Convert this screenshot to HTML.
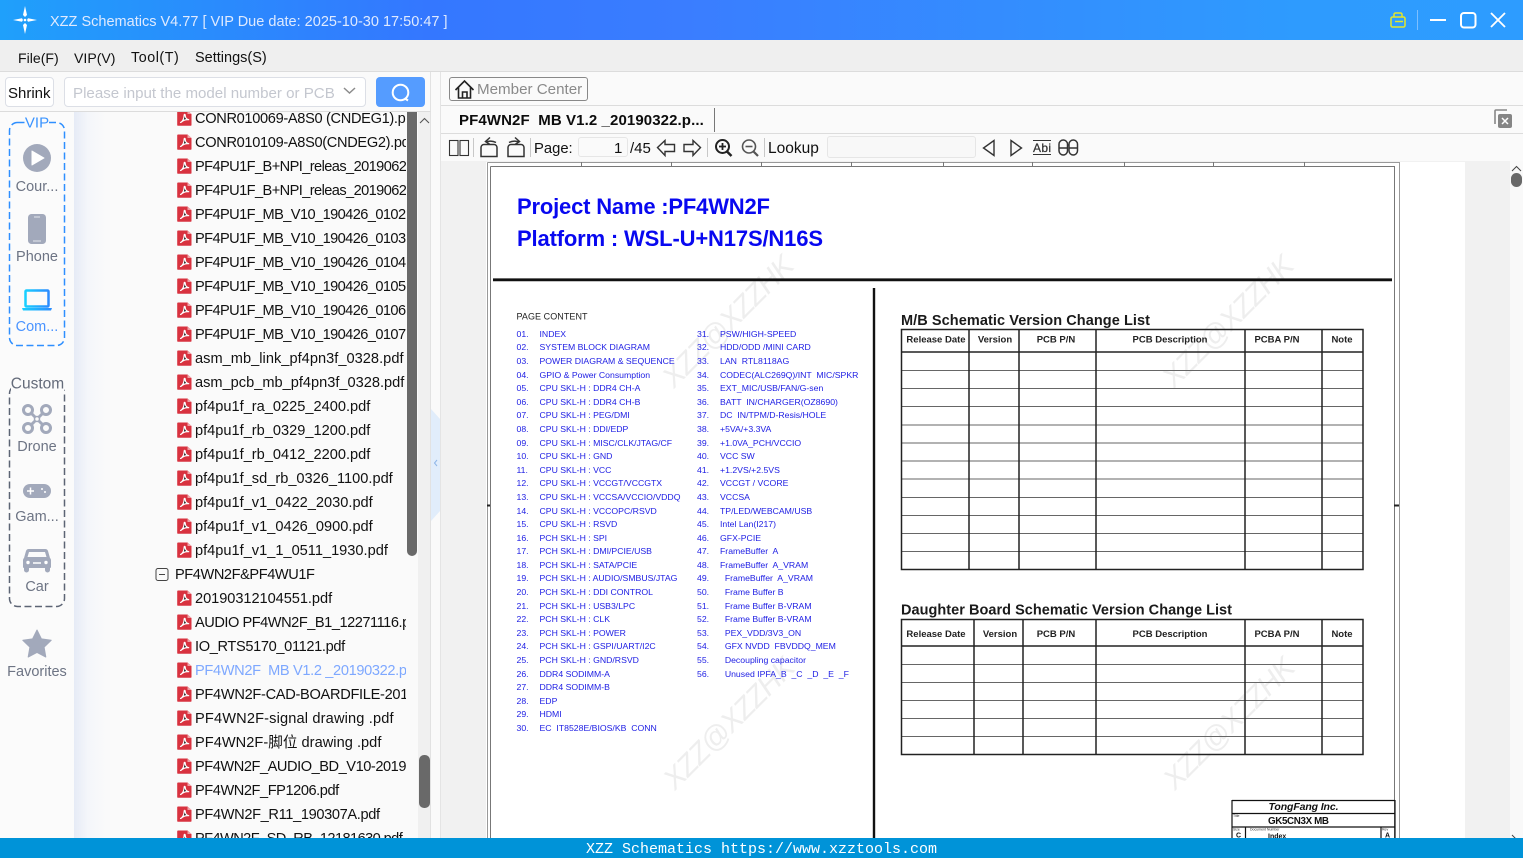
<!DOCTYPE html>
<html lang="en"><head><meta charset="utf-8"><title>XZZ Schematics</title>
<style>
html,body{margin:0;padding:0;width:1523px;height:858px;overflow:hidden;background:#fafafa;font-family:"Liberation Sans","Noto Sans CJK SC",sans-serif;color:#111}
.t{position:absolute;white-space:pre;line-height:20px;height:20px}
.b{position:absolute;box-sizing:border-box}
#title{left:0;top:0;width:1523px;height:40px;background:linear-gradient(90deg,#1fa0fb 0,#3477ff 28%,#3a7dff 45%,#2e9bfe 85%,#2d9cff 100%)}
#tree{left:74px;top:112px;width:332px;height:726px;overflow:hidden;background:linear-gradient(90deg,#e6ebf6 0,#f4f6fa 14px,#fafafa 32px)}
#rows{position:absolute;left:0;top:-6px}
#rows div{position:relative;height:24px;line-height:26px;font-size:14.6px;white-space:pre;padding-left:121px;color:#111}
#rows svg{position:absolute;left:103px;top:4px;width:15px;height:16px}
#rows .c{letter-spacing:-.58px}
.s{font-size:14.5px;color:#6d7484;text-align:center;left:0;width:74px}
.l{position:absolute;font-size:8.7px;line-height:13.586px;color:#2020e4;white-space:pre}
.l i{font-style:normal;display:inline-block;width:23px}
#foot{left:0;top:838px;width:1523px;height:20px;background:#0093d8;color:#fff;font:15px/24px "Liberation Mono",monospace;text-align:center;overflow:hidden}
</style></head><body>

<div class="b" id="title"></div>
<div class="t" style="left:50px;top:12px;font-size:14.52px;color:#dfeaff">XZZ Schematics V4.77 [ VIP Due date: 2025-10-30 17:50:47 ]</div>

<div class="b" style="left:0;top:40px;width:1523px;height:32px;background:#efefef;border-bottom:1px solid #dcdcdc"></div>
<div class="t" style="left:18px;top:48px;font-size:14.1px">File(F)</div>
<div class="t" style="left:74px;top:48px;font-size:14.1px">VIP(V)</div>
<div class="t" style="left:131px;top:48px;font-size:14.3px;letter-spacing:.55px">Tool(T)</div>
<div class="t" style="left:195px;top:48px;font-size:14.5px">Settings(S)</div>

<!-- left panel -->
<div class="b" style="left:0;top:72px;width:431px;height:40px;background:#fafafa;border-bottom:1px solid #dcdcdc;border-right:1px solid #e2e2e2"></div>
<div class="b" style="left:5px;top:77px;width:49px;height:30px;background:#fff;border:1px solid #dcdfe6;border-radius:4px"></div>
<div class="t" style="left:8px;top:84px;font-size:15px">Shrink</div>
<div class="b" style="left:64px;top:77px;width:302px;height:30px;background:#fff;border:1px solid #dcdfe6;border-radius:4px"></div>
<div class="t" style="left:73px;top:84px;font-size:15.1px;color:#c4c7cf">Please input the model number or PCB</div>
<div class="b" style="left:376px;top:77px;width:49px;height:30px;background:#559cff;border-radius:4px"></div>

<div class="b" style="left:0;top:112px;width:74px;height:726px;background:#fbfbfb"></div>
<div class="b" id="tree"><div id="rows">
<div style="letter-spacing:-.33px"><svg><use href="#p"/></svg>CONR010069-A8S0 (CNDEG1).pdf</div>
<div style="letter-spacing:-.33px"><svg><use href="#p"/></svg>CONR010109-A8S0(CNDEG2).pdf</div>
<div class="c"><svg><use href="#p"/></svg>PF4PU1F_B+NPI_releas_20190620.pdf</div>
<div class="c"><svg><use href="#p"/></svg>PF4PU1F_B+NPI_releas_20190621.pdf</div>
<div class="c"><svg><use href="#p"/></svg>PF4PU1F_MB_V10_190426_0102.pdf</div>
<div class="c"><svg><use href="#p"/></svg>PF4PU1F_MB_V10_190426_0103.pdf</div>
<div class="c"><svg><use href="#p"/></svg>PF4PU1F_MB_V10_190426_0104.pdf</div>
<div class="c"><svg><use href="#p"/></svg>PF4PU1F_MB_V10_190426_0105.pdf</div>
<div class="c"><svg><use href="#p"/></svg>PF4PU1F_MB_V10_190426_0106.pdf</div>
<div class="c"><svg><use href="#p"/></svg>PF4PU1F_MB_V10_190426_0107.pdf</div>
<div style="letter-spacing:.03px"><svg><use href="#p"/></svg>asm_mb_link_pf4pn3f_0328.pdf</div>
<div><svg><use href="#p"/></svg>asm_pcb_mb_pf4pn3f_0328.pdf</div>
<div><svg><use href="#p"/></svg>pf4pu1f_ra_0225_2400.pdf</div>
<div><svg><use href="#p"/></svg>pf4pu1f_rb_0329_1200.pdf</div>
<div><svg><use href="#p"/></svg>pf4pu1f_rb_0412_2200.pdf</div>
<div><svg><use href="#p"/></svg>pf4pu1f_sd_rb_0326_1100.pdf</div>
<div><svg><use href="#p"/></svg>pf4pu1f_v1_0422_2030.pdf</div>
<div><svg><use href="#p"/></svg>pf4pu1f_v1_0426_0900.pdf</div>
<div><svg><use href="#p"/></svg>pf4pu1f_v1_1_0511_1930.pdf</div>
<div style="padding-left:101px;letter-spacing:-.43px">PF4WN2F&amp;PF4WU1F</div>
<div style="letter-spacing:-.05px"><svg><use href="#p"/></svg>20190312104551.pdf</div>
<div style="letter-spacing:-.47px"><svg><use href="#p"/></svg>AUDIO PF4WN2F_B1_12271116.pdf</div>
<div style="letter-spacing:-.35px"><svg><use href="#p"/></svg>IO_RTS5170_01121.pdf</div>
<div style="color:#7ea8ff;letter-spacing:-.35px"><svg><use href="#p"/></svg>PF4WN2F  MB V1.2 _20190322.pdf</div>
<div style="letter-spacing:-.3px"><svg><use href="#p"/></svg>PF4WN2F-CAD-BOARDFILE-2019.pdf</div>
<div style="letter-spacing:.15px"><svg><use href="#p"/></svg>PF4WN2F-signal drawing .pdf</div>
<div style="letter-spacing:.03px"><svg><use href="#p"/></svg>PF4WN2F-脚位 drawing .pdf</div>
<div style="letter-spacing:-.45px"><svg><use href="#p"/></svg>PF4WN2F_AUDIO_BD_V10-2019.pdf</div>
<div style="letter-spacing:-.44px"><svg><use href="#p"/></svg>PF4WN2F_FP1206.pdf</div>
<div style="letter-spacing:-.35px"><svg><use href="#p"/></svg>PF4WN2F_R11_190307A.pdf</div>
<div class="c"><svg><use href="#p"/></svg>PF4WN2F_SD_RB_12181630.pdf</div>
</div></div>
<div class="b" style="left:406px;top:112px;width:12px;height:726px;background:#fafafa"></div>
<div class="b" style="left:407px;top:112px;width:10px;height:444px;background:#696969;border-radius:0 0 5px 5px"></div>
<div class="b" style="left:418px;top:112px;width:13px;height:726px;background:#f0f0f0;border-right:1px solid #e2e2e2"></div>
<div class="b" style="left:419px;top:755px;width:11px;height:53px;background:#696969;border-radius:5px"></div>
<div class="b" style="left:431px;top:72px;width:10px;height:766px;background:#fafafa;border-right:1px solid #e4e4e4"></div>

<!-- sidebar text -->
<div class="t s" style="top:177px">Cour...</div>
<div class="t s" style="top:247px">Phone</div>
<div class="t s" style="top:317px;color:#4a94ff">Com...</div>
<div class="t s" style="top:437px">Drone</div>
<div class="t s" style="top:507px">Gam...</div>
<div class="t s" style="top:577px">Car</div>
<div class="t s" style="top:662px">Favorites</div>

<!-- right header -->
<div class="b" style="left:441px;top:72px;width:1082px;height:34px;background:#fafafa;border-bottom:1px solid #dcdcdc"></div>
<div class="b" style="left:441px;top:106px;width:1082px;height:28px;background:#fafafa;border-bottom:1px solid #dcdcdc"></div>
<div class="b" style="left:441px;top:134px;width:1082px;height:27px;background:#fafafa"></div>
<div class="b" style="left:449px;top:77px;width:139px;height:24px;background:#fafafa;border:1px solid #888;border-radius:3px"></div>
<div class="t" style="left:477px;top:80px;font-size:15.15px;color:#8a8a8a">Member Center</div>
<div class="t" style="left:459px;top:111px;font-size:15px;font-weight:bold;color:#0c0c0c;letter-spacing:.1px">PF4WN2F  MB V1.2 _20190322.p...</div>
<div class="b" style="left:714px;top:108px;width:1px;height:24px;background:#777"></div>
<div class="t" style="left:534px;top:139px;font-size:14.8px">Page:</div>
<div class="b" style="left:578px;top:137px;width:50px;height:20px;background:#fafafa;border:1px solid #e6e6e6;border-radius:3px"></div>
<div class="t" style="left:614px;top:139px;font-size:15px">1</div>
<div class="t" style="left:630px;top:139px;font-size:15px">/45</div>
<div class="t" style="left:768px;top:139px;font-size:15.5px">Lookup</div>
<div class="b" style="left:827px;top:136px;width:149px;height:22px;background:#f8f8f8;border:1px solid #e6e6e6;border-radius:3px"></div>

<!-- viewer bg -->
<div class="b" style="left:441px;top:161px;width:1082px;height:677px;background:#f1f1f1"></div>
<div class="b" style="left:486px;top:162px;width:979px;height:676px;background:#fff"></div>
<div class="b" style="left:1510px;top:161px;width:13px;height:677px;background:#f9f9f9"></div>
<div class="b" style="left:1511px;top:173px;width:11px;height:14px;background:#696969;border-radius:5.5px"></div>

<!-- everything drawn -->
<svg style="position:absolute;left:0;top:0" width="1523" height="858" viewBox="0 0 1523 858" fill="none">
<defs>
<symbol id="p" viewBox="0 0 15 16"><path d="M1 .5h9.5L14.5 4v11a.8.8 0 0 1-.8.8H1a.8.8 0 0 1-.8-.8V1.300A.8.8 0 0 1 1 .5z" fill="#d8323f"/><path d="M10.500 .5V4h4z" fill="#f0a0a5"/><path d="M3.500 12.500c2-1 3.500-4 3.700-7.500 .1-1 1-.8 1 .2 0 2.300 1.300 4 3.500 4.500-2.500-.2-5.500.5-7.500 2.500z" stroke="#fff" stroke-width="1.200" stroke-linejoin="round"/></symbol>
<linearGradient id="lap" x1="0" y1="0" x2="1" y2="0"><stop offset="0" stop-color="#18d0ff"/><stop offset="1" stop-color="#2c8cff"/></linearGradient>
</defs>

<!-- logo -->
<path d="M25 6l2 9-2 2-2-2zM25 34l2-9-2-2-2 2zM13 20l9-1.700 1 1.700-1 1.700zM37 20l-9-1.700-1 1.700 1 1.700z" fill="#fff"/>
<circle cx="25" cy="20" r="1.300" fill="#fff"/>
<!-- window controls -->
<g stroke="#e3e72a" stroke-width="1.500"><rect x="1391" y="17" width="14" height="10" rx="1.500"/><path d="M1394 17v-2.500a1.500 1.500 0 0 1 1.500-1.500h5a1.500 1.500 0 0 1 1.500 1.500V17M1395 21.500h8"/></g>
<path d="M1417.500 10v20" stroke="#7dbfff"/>
<path d="M1430 20h16" stroke="#fff" stroke-width="2"/>
<rect x="1461" y="13" width="14.500" height="14.500" rx="3" stroke="#fff" stroke-width="2"/>
<path d="M1491 13l14 14M1505 13l-14 14" stroke="#fff" stroke-width="1.800"/>
<!-- search chevron + button -->
<path d="M344 88l5.500 5 5.500-5" stroke="#8c8c8c" stroke-width="1.500"/>
<circle cx="400.500" cy="92.500" r="7.800" stroke="#fff" stroke-width="2"/><path d="M405 98.500l3 2" stroke="#fff" stroke-width="2"/>
<!-- scroll arrows -->
<path d="M420 123l4.500-4.500 4.500 4.500" stroke="#555" stroke-width="1.100"/>
<path d="M1512 171l4.500-4.500 4.500 4.500" stroke="#444" stroke-width="1"/>
<path d="M1512 835l4.500 4.500" stroke="#444"/>
<!-- splitter -->
<path d="M431 409l9 10v92l-9 10z" fill="#e1edfb"/>
<path d="M437 460l-2.500 3 2.500 3" stroke="#8fb6e8" stroke-width="1"/>
<!-- tree minus -->
<rect x="156" y="568.500" width="12" height="12" rx="2" stroke="#444"/><path d="M159 574.500h6" stroke="#444"/>

<!-- sidebar -->
<rect x="9.500" y="122.500" width="55" height="223" rx="8" stroke="#2e8fff" stroke-width="1.500" stroke-dasharray="7 3.500"/>
<rect x="26" y="115" width="22" height="15" fill="#fbfbfb"/>
<text x="37" y="127.500" text-anchor="middle" font-size="15" fill="#3b94ff" font-family="Liberation Sans">VIP</text>
<circle cx="37" cy="158" r="14" fill="#a2a9bb"/><path d="M32 151v14l12-7z" fill="#fff" stroke="#fff" stroke-linejoin="round"/>
<rect x="28" y="214" width="18" height="30" rx="3.500" fill="#a2a9bb"/><path d="M34 217h6M33 241h8" stroke="#e4e6ec" stroke-width="1"/>
<rect x="25.500" y="290.500" width="23" height="16" rx="1" stroke="url(#lap)" stroke-width="2.500"/><path d="M22 308h30l-1 2.500H23z" fill="url(#lap)"/>

<rect x="9.500" y="385.500" width="55" height="221" rx="8" stroke="#5c6474" stroke-width="1.500" stroke-dasharray="7 3.500"/>
<rect x="11" y="375" width="53" height="17" fill="#fbfbfb"/>
<text x="37.500" y="388.500" text-anchor="middle" font-size="15.500" fill="#646b7a" font-family="Liberation Sans">Custom</text>
<g stroke="#a2a9bb" stroke-width="3"><circle cx="28" cy="410" r="4.500"/><circle cx="46" cy="410" r="4.500"/><circle cx="28" cy="428" r="4.500"/><circle cx="46" cy="428" r="4.500"/><path d="M31 413l12 12M43 413l-12 12"/></g>
<circle cx="37" cy="419" r="2.500" fill="#fbfbfb" stroke="#a2a9bb" stroke-width="1.500"/>
<rect x="23" y="484" width="28" height="14" rx="7" fill="#a2a9bb"/><path d="M27 491h7M30.500 487.500v7" stroke="#fff" stroke-width="1.500"/><circle cx="42" cy="489" r="1" fill="#fff"/><circle cx="45" cy="492" r="1" fill="#fff"/>
<path d="M29 549h16a3 3 0 0 1 3 2l2 7a3 3 0 0 1 1 2v7a1 1 0 0 1-1 1v2a1.500 1.500 0 0 1-5 0v-2H29v2a1.500 1.500 0 0 1-5 0v-2a1 1 0 0 1-1-1v-7a3 3 0 0 1 1-2l2-7a3 3 0 0 1 3-2z" fill="#a2a9bb"/><path d="M29 552h16l1.500 5h-19z" fill="#fbfbfb"/><circle cx="28" cy="562.500" r="1.700" fill="#fff"/><circle cx="46" cy="562.500" r="1.700" fill="#fff"/><path d="M33 563h8" stroke="#fff" stroke-width="1.500"/>
<path d="M37 630l4.400 8.900 9.800 1.400-7.100 6.900 1.700 9.800-8.800-4.600-8.800 4.600 1.700-9.800-7.100-6.900 9.800-1.400z" fill="#a2a9bb" stroke="#a2a9bb" stroke-linejoin="round"/>

<!-- member center house -->
<path d="M455.500 90l9-9 9 9M458.500 87.500V98h12V87.500M462.500 98v-6h4.500v6" stroke="#222" stroke-width="1.600"/>
<!-- close all -->
<path d="M1495 124v-13a1 1 0 0 1 1-1h11" stroke="#888" stroke-width="1.600"/><rect x="1498" y="114" width="14" height="14" rx="2" fill="#858585"/><path d="M1502 118l6 6M1508 118l-6 6" stroke="#fff" stroke-width="1.500"/>

<!-- toolbar -->
<g stroke="#333" stroke-width="1.100">
<rect x="449.500" y="140.500" width="8.500" height="15"/><rect x="460" y="140.500" width="8.500" height="15"/>
</g>
<path d="M473.500 138v19M530.500 138v19M707.500 138v19M764.500 138v19" stroke="#c8c8c8"/>
<g stroke="#333" stroke-width="1.500">
<path d="M481 156.500v-9a3 3 0 0 1 3-3h10a3 3 0 0 1 3 3v9zM486 142a9 6 0 0 1 10 .5M490 137.500l-4.500 4 4.500 3"/>
<path d="M508 156.500v-9a3 3 0 0 1 3-3h10a3 3 0 0 1 3 3v9zM519 142a9 6 0 0 0-10 .5M515 137.500l4.500 4-4.500 3"/>
</g>
<g stroke="#333" stroke-width="1.400" stroke-linejoin="miter">
<path d="M657.500 147.500l7.500-7v4h9.500v7H665v4z"/>
<path d="M700.500 147.500l-7.500-7v4H684v7h9v4z"/>
</g>
<circle cx="722.500" cy="146.500" r="6.500" stroke="#222" stroke-width="2"/><path d="M727 151.500l4.500 4.500" stroke="#222" stroke-width="2.500"/><path d="M719 146.500h7M722.500 143v7" stroke="#222" stroke-width="1.800"/>
<circle cx="749" cy="146.500" r="6.500" stroke="#555" stroke-width="1.600"/><path d="M753.500 151.500l4.500 4.500" stroke="#555" stroke-width="2.200"/><path d="M745.500 146.500h7" stroke="#555" stroke-width="1.600"/>
<path d="M994 140.500v15l-10.500-7.500z" stroke="#333" stroke-width="1.400"/>
<path d="M1011 140.500v15l10.500-7.500z" stroke="#333" stroke-width="1.400"/>
<path d="M1033 140.500h18M1033 154.500h18" stroke="#333"/>
<text x="1033" y="152" font-size="12" fill="#333" stroke="#333" stroke-width=".25" font-family="Liberation Sans" textLength="18">Abi</text>
<g stroke="#333" stroke-width="1.500"><rect x="1059" y="140" width="8.500" height="15" rx="4.200"/><rect x="1069" y="140" width="8.500" height="15" rx="4.200"/><path d="M1059 148h8.500M1069 148h8.500M1067.500 145h1.500"/></g>

<!-- document: frame -->
<path d="M487.500 162.500V838M487.500 162.500H1399.500V838" stroke="#999"/>
<path d="M490.500 166.500V838M490.500 166.500H1394.500V838" stroke="#777"/>
<path d="M581.500 162v4M671.500 162v4M761.500 162v4M851.500 162v4M943.500 162v4M1032.500 162v4M1124.500 162v4M1213.500 162v4M1304.500 162v4" stroke="#777"/>
<path d="M487 505.500h3M1394 505.500h5" stroke="#222" stroke-width="2"/>

<!-- watermarks -->
<g fill="#eeeeee" font-family="Liberation Sans" font-size="29" font-style="italic">
<text transform="translate(674 389) rotate(-45)" textLength="172">XZZ@XZZHK</text>
<text transform="translate(1174 389) rotate(-45)" textLength="172">XZZ@XZZHK</text>
<text transform="translate(675 791) rotate(-45)" textLength="172">XZZ@XZZHK</text>
<text transform="translate(1175 791) rotate(-45)" textLength="172">XZZ@XZZHK</text>
</g>

<!-- titles -->
<g font-family="Liberation Sans" font-weight="bold">
<text x="517" y="214" font-size="22" fill="#0808f0" textLength="253">Project Name :PF4WN2F</text>
<text x="517" y="246" font-size="22" fill="#0808f0" textLength="306">Platform : WSL-U+N17S/N16S</text>
<text x="901" y="325" font-size="14.500" fill="#1a1a1a" textLength="249">M/B Schematic Version Change List</text>
<text x="901" y="614.500" font-size="14.500" fill="#1a1a1a" textLength="331">Daughter Board Schematic Version Change List</text>
</g>
<path d="M493 279.800H1392" stroke="#111" stroke-width="2.800"/>
<path d="M874 288V838" stroke="#111" stroke-width="2.400"/>
<text x="516.500" y="319.500" font-size="9" fill="#222" font-family="Liberation Sans" textLength="71">PAGE CONTENT</text>

<!-- table 1 -->
<g stroke="#666" stroke-width="1">
<path d="M901 370.500H1363M901 388.500H1363M901 406.500H1363M901 425H1363M901 443H1363M901 461H1363M901 479H1363M901 497.500H1363M901 515.500H1363M901 533.500H1363M901 551.500H1363"/>
<path d="M901 664.500H1363M901 682.500H1363M901 700.500H1363M901 718.500H1363M901 736.500H1363"/>
</g>
<g stroke="#222" stroke-width="1.500">
<rect x="901.500" y="329.500" width="461.500" height="240"/>
<path d="M901 352H1363M969 329v241M1019 329v241M1096 329v241M1245 329v241M1322 329v241"/>
<rect x="901.500" y="619.500" width="461.500" height="135"/>
<path d="M901 646H1363M974 619v136M1023 619v136M1096 619v136M1245 619v136M1322 619v136"/>
</g>
<g font-family="Liberation Sans" font-weight="bold" font-size="9.500" fill="#222" text-anchor="middle">
<text x="936" y="342.500">Release Date</text><text x="995" y="342.500">Version</text><text x="1056" y="342.500">PCB P/N</text><text x="1170" y="342.500">PCB Description</text><text x="1277" y="342.500">PCBA P/N</text><text x="1342" y="342.500">Note</text>
<text x="936" y="637">Release Date</text><text x="1000" y="637">Version</text><text x="1056" y="637">PCB P/N</text><text x="1170" y="637">PCB Description</text><text x="1277" y="637">PCBA P/N</text><text x="1342" y="637">Note</text>
</g>

<!-- title block -->
<g stroke="#111" stroke-width="1.200">
<path d="M1232 800.500H1395M1232 813.500H1395M1232 827H1395M1232 800v38M1395 800v38M1245.500 827v11M1381 827v11"/>
</g>
<g font-family="Liberation Sans" font-weight="bold" fill="#111">
<text x="1268.500" y="810" font-size="10.500" font-style="italic" textLength="70">TongFang Inc.</text>
<text x="1268" y="824" font-size="9.800" textLength="61">GK5CN3X MB</text>
<text x="1268" y="838.500" font-size="7">Index</text>
<text x="1236" y="837.500" font-size="7">C</text>
<text x="1385" y="837.500" font-size="7">A</text>
</g>
<g font-family="Liberation Sans" font-size="3.500" fill="#333">
<text x="1233" y="817">Title</text><text x="1233" y="830.500">Size</text><text x="1250" y="830.500">Document Number</text><text x="1382" y="830.500">Rev</text>
</g>
</svg>

<div class="l" style="left:516.500px;top:327.800px"><i>01.</i>INDEX
<i>02.</i>SYSTEM BLOCK DIAGRAM
<i>03.</i>POWER DIAGRAM &amp; SEQUENCE
<i>04.</i>GPIO &amp; Power Consumption
<i>05.</i>CPU SKL-H : DDR4 CH-A
<i>06.</i>CPU SKL-H : DDR4 CH-B
<i>07.</i>CPU SKL-H : PEG/DMI
<i>08.</i>CPU SKL-H : DDI/EDP
<i>09.</i>CPU SKL-H : MISC/CLK/JTAG/CF
<i>10.</i>CPU SKL-H : GND
<i>11.</i>CPU SKL-H : VCC
<i>12.</i>CPU SKL-H : VCCGT/VCCGTX
<i>13.</i>CPU SKL-H : VCCSA/VCCIO/VDDQ
<i>14.</i>CPU SKL-H : VCCOPC/RSVD
<i>15.</i>CPU SKL-H : RSVD
<i>16.</i>PCH SKL-H : SPI
<i>17.</i>PCH SKL-H : DMI/PCIE/USB
<i>18.</i>PCH SKL-H : SATA/PCIE
<i>19.</i>PCH SKL-H : AUDIO/SMBUS/JTAG
<i>20.</i>PCH SKL-H : DDI CONTROL
<i>21.</i>PCH SKL-H : USB3/LPC
<i>22.</i>PCH SKL-H : CLK
<i>23.</i>PCH SKL-H : POWER
<i>24.</i>PCH SKL-H : GSPI/UART/I2C
<i>25.</i>PCH SKL-H : GND/RSVD
<i>26.</i>DDR4 SODIMM-A
<i>27.</i>DDR4 SODIMM-B
<i>28.</i>EDP
<i>29.</i>HDMI
<i>30.</i>EC  IT8528E/BIOS/KB  CONN</div>
<div class="l" style="left:697px;top:327.800px"><i>31.</i>PSW/HIGH-SPEED
<i>32.</i>HDD/ODD /MINI CARD
<i>33.</i>LAN  RTL8118AG
<i>34.</i>CODEC(ALC269Q)/INT  MIC/SPKR
<i>35.</i>EXT_MIC/USB/FAN/G-sen
<i>36.</i>BATT  IN/CHARGER(OZ8690)
<i>37.</i>DC  IN/TPM/D-Resis/HOLE
<i>38.</i>+5VA/+3.3VA
<i>39.</i>+1.0VA_PCH/VCCIO
<i>40.</i>VCC SW
<i>41.</i>+1.2VS/+2.5VS
<i>42.</i>VCCGT / VCORE
<i>43.</i>VCCSA
<i>44.</i>TP/LED/WEBCAM/USB
<i>45.</i>Intel Lan(I217)
<i>46.</i>GFX-PCIE
<i>47.</i>FrameBuffer  A
<i>48.</i>FrameBuffer  A_VRAM
<i>49.</i>  FrameBuffer  A_VRAM
<i>50.</i>  Frame Buffer B
<i>51.</i>  Frame Buffer B-VRAM
<i>52.</i>  Frame Buffer B-VRAM
<i>53.</i>  PEX_VDD/3V3_ON
<i>54.</i>  GFX NVDD  FBVDDQ_MEM
<i>55.</i>  Decoupling capacitor
<i>56.</i>  Unused IPFA_B  _C  _D  _E  _F</div>

<div class="b" id="foot">XZZ Schematics https://www.xzztools.com</div>
</body></html>
